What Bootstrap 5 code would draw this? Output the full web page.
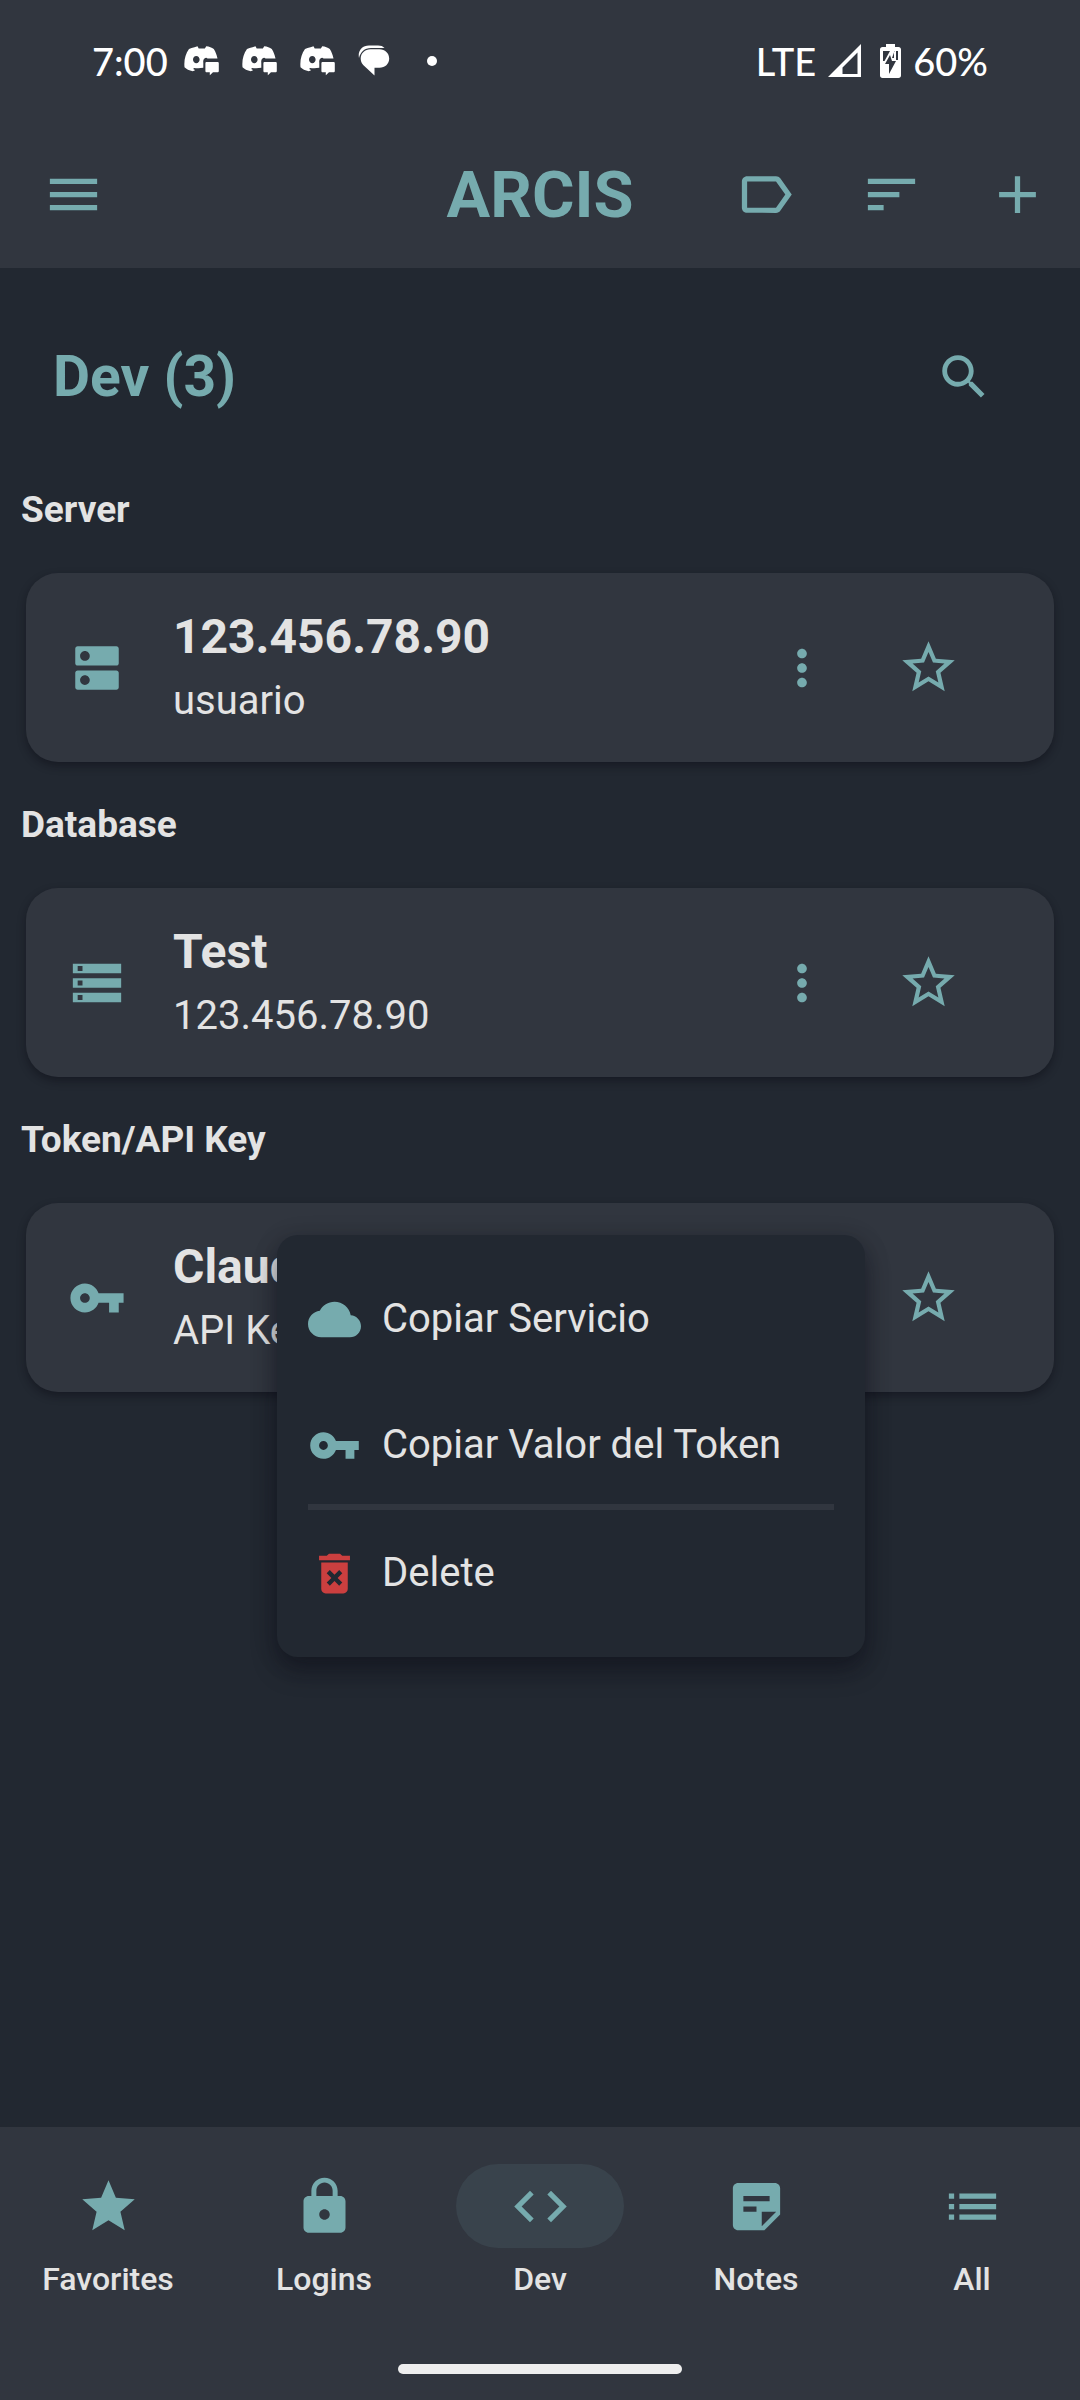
<!DOCTYPE html>
<html lang="es">
<head>
<meta charset="utf-8">
<meta name="viewport" content="width=device-width, initial-scale=1">
<title>ARCIS</title>
<link href="https://cdn.jsdelivr.net/npm/bootstrap@5.3.0/dist/css/bootstrap.min.css" rel="stylesheet">
<style>
  :root { --ink: #222831; --panel: #31363f; --teal: #76abae; --text: #e3e3e3; --danger: #cb3f3f; }
  body { background: var(--ink); color: var(--text); font-family: Roboto, "Liberation Sans", sans-serif; }
  svg { fill: currentColor; display: block; flex: none; }
  .panel { background: var(--panel); }
  .teal { color: var(--teal); }
  .red { color: var(--danger); }
  .ico-lg { width: 63px; height: 63px; }
  .ico-md { width: 58px; height: 58px; }
  .ico-sm { width: 53px; height: 53px; }

  .statusbar { height: 121px; padding: 0 92px; color: #fff; font: 500 38px/44px Lato, "Open Sans", sans-serif; }
  .notes-tray { gap: 23px; margin-left: 16px; }
  .signals { gap: 12px; }
  .battery { margin-left: 7px; }
  .toolbar { height: 147px; }
  .tap { width: 126px; height: 126px; padding: 0; border: 0; color: var(--teal); display: flex; align-items: center; justify-content: center; }
  .tap:hover { color: var(--teal); }
  .tap-menu { width: 147px; }
  .brand { font-size: 65px; line-height: 76px; font-weight: 700; }

  .page-head { padding: 46px 53px 7px; height: 179px; }
  .page-title { font-size: 57px; line-height: 68px; font-weight: 700; }
  .group-title { font-size: 37px; line-height: 126px; font-weight: 700; padding: 0 21px; margin: 0; }
  .entry { height: 189px; margin: 0 26px; padding: 0 63px 0 42px; border: 0; border-radius: 32px; background: var(--panel); color: var(--text); box-shadow: 0 4px 8px rgba(10, 10, 20, .45); }
  .entry-text { margin-left: 47px; }
  .entry-name { font-size: 48px; line-height: 65px; font-weight: 700; }
  .entry-sub { font-size: 40px; line-height: 63px; }

  .popmenu { top: 32px; right: 189px; width: 588px; padding: 21px 0; border: 0; border-radius: 21px; background: var(--ink); box-shadow: 0 14px 24px rgba(10, 10, 20, .4), 0 4px 24px rgba(10, 10, 20, .2); }
  .popmenu .dropdown-item { height: 126px; padding: 0 31px; gap: 21px; color: var(--text); font-size: 40px; line-height: 60px; }
  .popmenu .dropdown-item:hover, .popmenu .dropdown-item:focus { background: var(--panel); color: var(--text); }
  .popmenu .dropdown-divider { height: 6px; margin: -4px 31px 0; border: 0; background: var(--panel); opacity: 1; }

  .tabs { height: 237px; padding-top: 37px; }
  .tab-link { color: var(--text); font-size: 32px; line-height: 42px; font-weight: 500; gap: 10px; }
  .tab-link:hover { color: var(--text); }
  .pill { width: 168px; height: 84px; border-radius: 42px; color: var(--teal); }
  .tab-link.active .pill { background: #39434c; }
  .homebar { width: 284px; height: 10px; border-radius: 5px; background: #eee; margin: 0 auto 26px; }
</style>
<script src="https://cdn.jsdelivr.net/npm/bootstrap@5.3.0/dist/js/bootstrap.bundle.min.js"></script>
</head>
<body class="d-flex flex-column min-vh-100">

<svg width="0" height="0" class="position-absolute" aria-hidden="true">
  <symbol id="chat-face" viewBox="0 0 35 30">
    <path fill-rule="evenodd" d="M10.500 1.200 13.500.3l1.200 2.200h6.200L22.200.3c3 .3 5.600 1.200 7.600 2.600 1.900 3 3 6.100 3.700 9.700H23.500c-.5-.9-2-1.200-3 0-1 .9-1.500 2.300-1.200 4v5.200c-3.300.6-6.500.6-9.300.1l-.8 1.200 1.800 1c-.5.700-1.300 1.200-2.200 1.200C5 24.500 2.500 23.200.5 21.300c-.7-7.200.9-13.300 4.500-18.300 1.600-.9 3.400-1.500 5.500-1.800zM12.300 9.900c-1.900 0-3.300 1.700-3.300 3.700s1.400 3.700 3.300 3.700 3.300-1.700 3.300-3.700-1.400-3.700-3.300-3.700z"/>
    <path d="M22.800 16h10.600c.9 0 1.400.5 1.400 1.400v7.500c0 .9-.5 1.400-1.400 1.400H29l-3.200 3v-3h-3c-.9 0-1.400-.5-1.400-1.400v-7.500c0-.9.5-1.400 1.400-1.400z"/>
  </symbol>
  <symbol id="star-line" viewBox="0 0 24 24"><path d="M22 9.240l-7.190-.62L12 2 9.190 8.630 2 9.240l5.460 4.730L5.820 21 12 17.270 18.180 21l-1.630-7.030L22 9.240zM12 15.400l-3.760 2.270 1-4.280-3.320-2.880 4.380-.38L12 6.100l1.710 4.040 4.380.38-3.320 2.880 1 4.280L12 15.400z"/></symbol>
  <symbol id="dots" viewBox="0 0 24 24"><path d="M12 8c1.100 0 2-.9 2-2s-.9-2-2-2-2 .9-2 2 .9 2 2 2zm0 2c-1.100 0-2 .9-2 2s.9 2 2 2 2-.9 2-2-.9-2-2-2zm0 6c-1.100 0-2 .9-2 2s.9 2 2 2 2-.9 2-2-.9-2-2-2z"/></symbol>
  <symbol id="key" viewBox="0 0 24 24"><path d="M12.650 10C11.830 7.670 9.610 6 7 6c-3.310 0-6 2.690-6 6s2.690 6 6 6c2.610 0 4.830-1.670 5.650-4H17v4h4v-4h2v-4H12.650zM7 14c-1.100 0-2-.9-2-2s.9-2 2-2 2 .9 2 2-.9 2-2 2z"/></symbol>
</svg>

<header class="panel">
  <div class="statusbar d-flex align-items-center justify-content-between">
    <div class="d-flex align-items-center">
      <span>7:00</span>
      <div class="notes-tray d-flex align-items-center">
        <svg width="35" height="30"><use href="#chat-face"/></svg>
        <svg width="35" height="30"><use href="#chat-face"/></svg>
        <svg width="35" height="30"><use href="#chat-face"/></svg>
        <svg width="32" height="31" viewBox="0 0 32 31"><path d="M1 13C-.5 6 4 .5 11 .5h9c3 0 5 .8 6.500 2.500H13C6.500 3 2.500 7 1 13z"/><path d="M12.500 4.200h9c5.500 0 9.700 4 9.700 9.300s-4.200 9.300-9.700 9.300h-5V30.500L5.200 20C3.500 18.300 2.700 16 2.700 13.500c0-5.300 4.300-9.300 9.800-9.300z"/></svg>
        <svg width="38" height="10" viewBox="0 0 38 10"><circle cx="19" cy="5" r="5"/></svg>
      </div>
    </div>
    <div class="signals d-flex align-items-center">
      <span>LTE</span>
      <svg width="33" height="33" viewBox="0 0 33 33"><path fill-rule="evenodd" d="M33 0v33H0zM29.500 8.500 14.500 23.500v6.500h15z"/></svg>
      <svg class="battery" width="21" height="34" viewBox="0 0 21 34"><path fill-rule="evenodd" d="M6 0h9v3h3.500C20 3 21 4 21 5.500v26c0 1.500-1 2.500-2.500 2.500h-16C1 34 0 33 0 31.500v-26C0 4 1 3 2.500 3H6zM3 7v10h1.500L10 7zm11.500 0L12 14h2V7zm1.500 0v9h2V7zM10 11 5 20h4v10l7-13h-4z"/></svg>
      <span>60%</span>
    </div>
  </div>
  <nav class="toolbar d-flex align-items-center" aria-label="Principal">
    <div class="col">
      <button class="btn tap tap-menu" type="button" aria-label="Menu"><svg class="ico-lg" viewBox="0 0 24 24"><path d="M3 18h18v-2H3v2zm0-5h18v-2H3v2zm0-7v2h18V6H3z"/></svg></button>
    </div>
    <h1 class="brand teal m-0">ARCIS</h1>
    <div class="col d-flex justify-content-end">
      <button class="btn tap" type="button" aria-label="Label"><svg class="ico-lg" viewBox="0 0 24 24"><path d="M17.630 5.840C17.270 5.330 16.670 5 16 5L5 5.010C3.900 5.010 3 5.900 3 7v10c0 1.100.9 1.990 2 1.990L16 19c.67 0 1.270-.33 1.630-.84L22 12l-4.370-6.160zM16 17H5V7h11l3.550 5L16 17z"/></svg></button>
      <button class="btn tap" type="button" aria-label="Sort"><svg class="ico-lg" viewBox="0 0 24 24"><path d="M3 18h6v-2H3v2zM3 6v2h18V6H3zm0 7h12v-2H3v2z"/></svg></button>
      <button class="btn tap" type="button" aria-label="Add"><svg class="ico-lg" viewBox="0 0 24 24"><path d="M19 13h-6v6h-2v-6H5v-2h6V5h2v6h6v2z"/></svg></button>
    </div>
  </nav>
</header>

<main class="flex-grow-1">
  <div class="page-head d-flex align-items-center justify-content-between">
    <h2 class="page-title teal m-0">Dev (3)</h2>
    <button class="btn tap" type="button" aria-label="Search"><svg class="ico-md" viewBox="0 0 24 24"><path d="M15.500 14h-.79l-.28-.27C15.410 12.590 16 11.110 16 9.500 16 5.910 13.090 3 9.500 3S3 5.910 3 9.500 5.910 16 9.500 16c1.610 0 3.090-.59 4.230-1.570l.27.28v.79l5 4.990L20.490 19l-4.990-5zm-6 0C7.010 14 5 11.990 5 9.500S7.010 5 9.500 5 14 7.010 14 9.500 11.990 14 9.500 14z"/></svg></button>
  </div>

  <section>
    <h3 class="group-title">Server</h3>
    <article class="card entry flex-row align-items-center">
      <svg class="ico-md teal" viewBox="0 0 24 24"><path d="M20 13H4c-.55 0-1 .45-1 1v6c0 .55.45 1 1 1h16c.55 0 1-.45 1-1v-6c0-.55-.45-1-1-1zM7 19c-1.100 0-2-.9-2-2s.9-2 2-2 2 .9 2 2-.9 2-2 2zM20 3H4c-.55 0-1 .45-1 1v6c0 .55.45 1 1 1h16c.55 0 1-.45 1-1V4c0-.55-.45-1-1-1zM7 9c-1.100 0-2-.9-2-2s.9-2 2-2 2 .9 2 2-.9 2-2 2z"/></svg>
      <div class="entry-text flex-grow-1"><div class="entry-name">123.456.78.90</div><div class="entry-sub">usuario</div></div>
      <button class="btn tap" type="button" aria-label="Options"><svg class="ico-md"><use href="#dots"/></svg></button>
      <button class="btn tap" type="button" aria-label="Favorite"><svg class="ico-lg"><use href="#star-line"/></svg></button>
    </article>
  </section>

  <section>
    <h3 class="group-title">Database</h3>
    <article class="card entry flex-row align-items-center">
      <svg class="ico-md teal" viewBox="0 0 24 24"><path d="M2 20h20v-4H2v4zm2-3h2v2H4v-2zM2 4v4h20V4H2zm4 3H4V5h2v2zm-4 7h20v-4H2v4zm2-3h2v2H4v-2z"/></svg>
      <div class="entry-text flex-grow-1"><div class="entry-name">Test</div><div class="entry-sub">123.456.78.90</div></div>
      <button class="btn tap" type="button" aria-label="Options"><svg class="ico-md"><use href="#dots"/></svg></button>
      <button class="btn tap" type="button" aria-label="Favorite"><svg class="ico-lg"><use href="#star-line"/></svg></button>
    </article>
  </section>

  <section>
    <h3 class="group-title">Token/API Key</h3>
    <article class="card entry flex-row align-items-center position-relative">
      <svg class="ico-md teal"><use href="#key"/></svg>
      <div class="entry-text flex-grow-1"><div class="entry-name">Claude</div><div class="entry-sub">API Key</div></div>
      <button class="btn tap" type="button" aria-label="Options" aria-expanded="true"><svg class="ico-md"><use href="#dots"/></svg></button>
      <button class="btn tap" type="button" aria-label="Favorite"><svg class="ico-lg"><use href="#star-line"/></svg></button>
      <div class="dropdown-menu popmenu show">
        <button class="dropdown-item d-flex align-items-center" type="button"><svg class="ico-sm teal" viewBox="0 0 24 24"><path d="M19.350 10.040C18.670 6.590 15.640 4 12 4 9.110 4 6.600 5.640 5.350 8.040 2.340 8.360 0 10.910 0 14c0 3.310 2.690 6 6 6h13c2.760 0 5-2.240 5-5 0-2.640-2.050-4.780-4.650-4.960z"/></svg>Copiar Servicio</button>
        <button class="dropdown-item d-flex align-items-center" type="button"><svg class="ico-sm teal"><use href="#key"/></svg>Copiar Valor del Token</button>
        <hr class="dropdown-divider">
        <button class="dropdown-item d-flex align-items-center" type="button"><svg class="ico-sm red" viewBox="0 0 24 24"><path d="M6 19c0 1.100.9 2 2 2h8c1.100 0 2-.9 2-2V7H6v12zm2.460-7.120l1.410-1.410L12 12.590l2.120-2.120 1.410 1.410L13.410 14l2.120 2.120-1.410 1.410L12 15.410l-2.120 2.120-1.410-1.410L10.590 14l-2.130-2.120zM15.500 4l-1-1h-5l-1 1H5v2h14V4z"/></svg>Delete</button>
      </div>
    </article>
  </section>
</main>

<footer class="panel">
  <nav class="tabs d-flex align-items-start" aria-label="Secciones">
    <a href="#" class="tab-link col d-flex flex-column align-items-center text-decoration-none"><span class="pill d-flex align-items-center justify-content-center"><svg class="ico-lg" viewBox="0 0 24 24"><path d="M12 17.270L18.180 21l-1.640-7.030L22 9.240l-7.190-.61L12 2 9.190 8.630 2 9.240l5.460 4.730L5.820 21z"/></svg></span>Favorites</a>
    <a href="#" class="tab-link col d-flex flex-column align-items-center text-decoration-none"><span class="pill d-flex align-items-center justify-content-center"><svg class="ico-lg" viewBox="0 0 24 24"><path d="M18 8h-1V6c0-2.760-2.240-5-5-5S7 3.240 7 6v2H6c-1.100 0-2 .9-2 2v10c0 1.100.9 2 2 2h12c1.100 0 2-.9 2-2V10c0-1.100-.9-2-2-2zm-6 9c-1.100 0-2-.9-2-2s.9-2 2-2 2 .9 2 2-.9 2-2 2zm3.100-9H8.900V6c0-1.710 1.390-3.100 3.100-3.100 1.710 0 3.100 1.390 3.100 3.100v2z"/></svg></span>Logins</a>
    <a href="#" class="tab-link active col d-flex flex-column align-items-center text-decoration-none" aria-current="page"><span class="pill d-flex align-items-center justify-content-center"><svg class="ico-lg" viewBox="0 0 24 24"><path d="M9.400 16.600L4.800 12l4.600-4.600L8 6l-6 6 6 6 1.400-1.400zm5.200 0l4.600-4.600-4.600-4.600L16 6l6 6-6 6-1.400-1.400z"/></svg></span>Dev</a>
    <a href="#" class="tab-link col d-flex flex-column align-items-center text-decoration-none"><span class="pill d-flex align-items-center justify-content-center"><svg class="ico-lg" viewBox="0 0 24 24"><path fill-rule="evenodd" d="M19 3H5c-1.100 0-2 .9-2 2v14c0 1.100.9 2 2 2h10l6-6V5c0-1.100-.9-2-2-2zM7 8h10v2H7V8zm5 6H7v-2h5v2zm2 5.500V14h5.500L14 19.500z"/></svg></span>Notes</a>
    <a href="#" class="tab-link col d-flex flex-column align-items-center text-decoration-none"><span class="pill d-flex align-items-center justify-content-center"><svg class="ico-lg" viewBox="0 0 24 24"><path d="M3 13h2v-2H3v2zm0 4h2v-2H3v2zm0-8h2V7H3v2zm4 4h14v-2H7v2zm0 4h14v-2H7v2zM7 7v2h14V7H7z"/></svg></span>All</a>
  </nav>
  <div class="homebar"></div>
</footer>
</body>
</html>
